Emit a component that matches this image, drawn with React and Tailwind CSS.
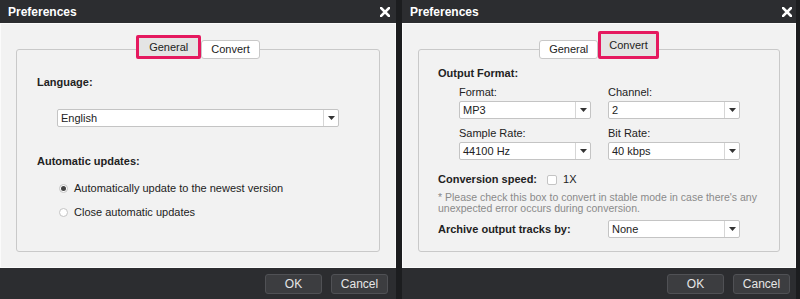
import React from 'react';

const font = { fontFamily: '"Liberation Sans", Arial, sans-serif' };

function CloseIcon() {
  return (
    <svg width="10" height="10" viewBox="0 0 10 10" className="block">
      <path d="M1 1 L9 9 M9 1 L1 9" stroke="#ffffff" strokeWidth="2.6" strokeLinecap="square" />
    </svg>
  );
}

function Select({ value, className }) {
  return (
    <div className={`flex h-[18px] bg-white border border-[#c4c4c4] rounded-[2px] ${className}`}>
      <div className="flex-1 flex items-center pl-[3px] text-[11px] text-[#222]">{value}</div>
      <div className="w-[15px] flex items-center justify-center border-l border-[#d6d6d6]">
        <svg width="7" height="4" viewBox="0 0 7 4"><path d="M0 0 H7 L3.5 4 Z" fill="#333" /></svg>
      </div>
    </div>
  );
}

function Tab({ label, active, tall }) {
  if (active) {
    return (
      <div className={`${tall ? 'h-[28px] px-[8px]' : 'h-[24px] px-[10px]'} border-[3px] border-[#e5195f] rounded-[2px] bg-[#e4e4e4] flex items-center text-[11px] text-[#222]`}>
        {label}
      </div>
    );
  }
  return (
    <div className="h-[19px] px-[9px] border border-[#c8c8c8] bg-white rounded-[3px] flex items-center text-[11px] text-[#222]">
      {label}
    </div>
  );
}

function Dialog({ width, children, leftTab, footerPr, closePr }) {
  return (
    <div className="flex flex-col bg-[#2c2d30]" style={{ width }}>
      <div className={`h-[23px] flex items-center justify-between pl-[8px] ${closePr}`}>
        <span className="text-[12px] font-bold text-white">Preferences</span>
        <CloseIcon />
      </div>
      <div className="h-[245px] bg-[#f2f2f2] border border-[#fbfbfb] px-[15px] pt-[25px]">
        <div className="border border-[#c9c9c9] rounded-[3px] h-[203px]">
          <div className="flex justify-center items-end h-[24px] -mt-[15px]">
            {leftTab ? (
              <>
                <Tab label="General" active />
                <Tab label="Convert" />
              </>
            ) : (
              <>
                <Tab label="General" />
                <Tab label="Convert" active tall />
              </>
            )}
          </div>
          {children}
        </div>
      </div>
      <div className={`h-[31px] flex items-center justify-end gap-[9px] ${footerPr}`}>
        <button className="w-[57px] h-[20px] rounded-[3px] bg-[#3c3d40] border border-[#505155] text-[12px] text-[#e6e6e6]">OK</button>
        <button className="w-[57px] h-[20px] rounded-[3px] bg-[#3c3d40] border border-[#505155] text-[12px] text-[#e6e6e6]">Cancel</button>
      </div>
    </div>
  );
}

function Radio({ checked, label, className }) {
  return (
    <div className={`flex items-center ml-[42px] ${className}`}>
      <div className="w-[9px] h-[9px] rounded-full border border-[#c4c4c4] bg-white flex items-center justify-center">
        {checked && <div className="w-[5px] h-[5px] rounded-full bg-[#444]" />}
      </div>
      <span className="ml-[6px] text-[11px] text-[#222] leading-[13px]">{label}</span>
    </div>
  );
}

export default function App() {
  return (
    <div className="w-[800px] h-[299px] bg-[#1c1d1f] flex gap-[6px] text-[#222]" style={font}>
      <Dialog width={396} leftTab footerPr="pr-[8px]" closePr="pr-[6px]">
        <div className="pl-[20px] mt-[17px] text-[11px] font-bold leading-[13px]">Language:</div>
        <Select value="English" className="ml-[40px] mr-[40px] mt-[20px] w-[282px]" />
        <div className="pl-[20px] mt-[28px] text-[11px] font-bold leading-[13px]">Automatic updates:</div>
        <Radio checked label="Automatically update to the newest version" className="mt-[14px]" />
        <Radio label="Close automatic updates" className="mt-[11px]" />
      </Dialog>
      <Dialog width={394} footerPr="pr-[6px]" closePr="pr-[4px]">
        <div className="pl-[19px] mt-[8px] text-[11px] font-bold leading-[13px]">Output Format:</div>
        <div className="grid grid-cols-[132px_132px] gap-x-[17px] pl-[40px] mt-[6px]">
          <div className="text-[11px] leading-[13px]">Format:</div>
          <div className="text-[11px] leading-[13px]">Channel:</div>
          <Select value="MP3" className="mt-[2px]" />
          <Select value="2" className="mt-[2px]" />
          <div className="text-[11px] leading-[13px] mt-[8px]">Sample Rate:</div>
          <div className="text-[11px] leading-[13px] mt-[8px]">Bit Rate:</div>
          <Select value="44100 Hz" className="mt-[2px]" />
          <Select value="40 kbps" className="mt-[2px]" />
        </div>
        <div className="pl-[19px] mt-[13px] flex items-center text-[11px] leading-[13px]">
          <span className="font-bold">Conversion speed:</span>
          <div className="ml-[10px] w-[10px] h-[10px] border border-[#c4c4c4] bg-white rounded-[2px]" />
          <span className="ml-[6px]">1X</span>
        </div>
        <div className="pl-[19px] pr-[10px] mt-[6px] text-[10.5px] leading-[11px] text-[#8a8a8a]">
          * Please check this box to convert in stable mode in case there's any unexpected error occurs during conversion.
        </div>
        <div className="pl-[19px] mt-[6px] flex items-center">
          <span className="w-[170px] text-[11px] font-bold leading-[13px]">Archive output tracks by:</span>
          <Select value="None" className="w-[132px]" />
        </div>
      </Dialog>
    </div>
  );
}
